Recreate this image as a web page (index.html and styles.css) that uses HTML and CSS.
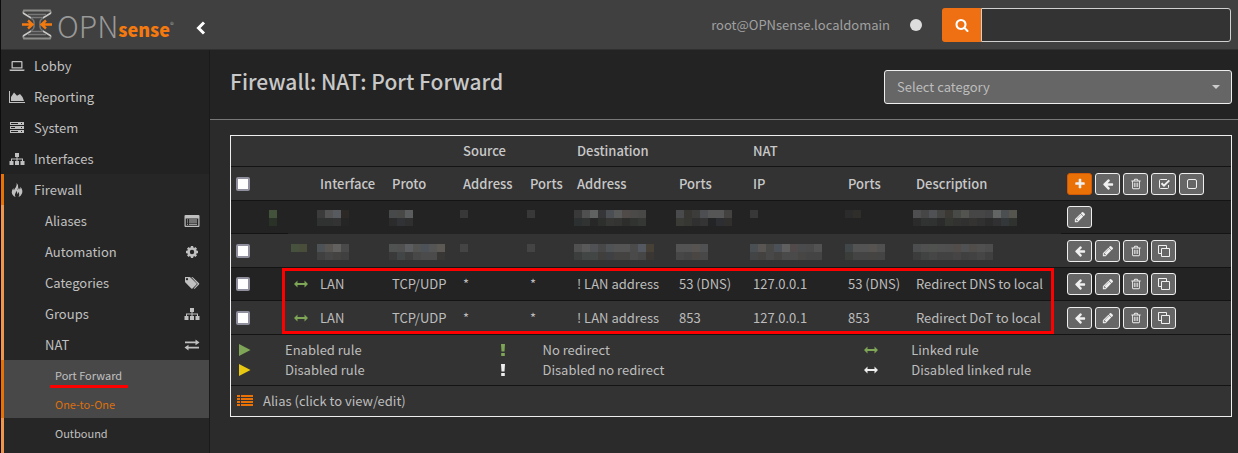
FILE: index.html
```html
<!DOCTYPE html>
<html lang="en">
<head>
<meta charset="utf-8">
<title>Port Forward | NAT | Firewall | OPNsense</title>
<link rel="stylesheet" href="styles.css">
</head>
<body>
<svg class="sprite" aria-hidden="true">
  <symbol id="left" viewBox="0 0 1792 1792"><path d="M1664 896v128q0 53-32.5 90.5t-84.5 37.5h-704l293 294q38 36 38 90t-38 90l-75 76q-37 37-90 37-52 0-91-37l-651-652q-37-37-37-90 0-52 37-91l651-650q38-38 91-38 52 0 90 38l75 74q38 38 38 91t-38 91l-293 293h704q52 0 84.5 37.5t32.5 90.5z"/></symbol>
  <symbol id="trash" viewBox="0 0 1792 1792"><path d="M704 736v576q0 14-9 23t-23 9h-64q-14 0-23-9t-9-23v-576q0-14 9-23t23-9h64q14 0 23 9t9 23zm256 0v576q0 14-9 23t-23 9h-64q-14 0-23-9t-9-23v-576q0-14 9-23t23-9h64q14 0 23 9t9 23zm256 0v576q0 14-9 23t-23 9h-64q-14 0-23-9t-9-23v-576q0-14 9-23t23-9h64q14 0 23 9t9 23zm128 724v-948h-896v948q0 22 7 40.5t14.5 27 10.5 8.5h832q3 0 10.5-8.5t14.5-27 7-40.5zm-672-1076h448l-48-117q-7-9-17-11h-317q-10 2-17 11zm928 32v64q0 14-9 23t-23 9h-96v948q0 83-47 143.5t-113 60.5h-832q-66 0-113-58.5t-47-141.5v-952h-96q-14 0-23-9t-9-23v-64q0-14 9-23t23-9h309l70-167q15-37 54-63t79-26h320q40 0 79 26t54 63l70 167h309q14 0 23 9t9 23z"/></symbol>
  <symbol id="pencil" viewBox="0 0 1792 1792"><path d="M491 1536l91-91-235-235-91 91v107h128v128h107zm523-928q0-22-22-22-10 0-17 7l-542 542q-7 7-7 17 0 22 22 22 10 0 17-7l542-542q7-7 7-17zm-54-192l416 416-832 832h-416v-416zm683 96q0 53-37 90l-166 166-416-416 166-165q36-38 90-38 53 0 91 38l235 234q37 39 37 91z"/></symbol>
  <symbol id="plus" viewBox="0 0 1792 1792"><path d="M1600 736v192q0 40-28 68t-68 28h-416v416q0 40-28 68t-68 28h-192q-40 0-68-28t-28-68v-416h-416q-40 0-68-28t-28-68v-192q0-40 28-68t68-28h416v-416q0-40 28-68t68-28h192q40 0 68 28t28 68v416h416q40 0 68 28t28 68z"/></symbol>
  <symbol id="search" viewBox="0 0 1792 1792"><path d="M1216 832q0-185-131.5-316.5t-316.5-131.5-316.5 131.5-131.5 316.5 131.5 316.5 316.5 131.5 316.5-131.5 131.5-316.5zm512 832q0 52-38 90t-90 38q-54 0-90-38l-343-342q-179 124-399 124-143 0-273.5-55.5t-225-150-150-225-55.5-273.5 55.5-273.5 150-225 225-150 273.5-55.5 273.5 55.5 225 150 150 225 55.5 273.5q0 220-124 399l343 343q37 37 37 90z"/></symbol>
  <symbol id="clone" viewBox="0 0 14 14"><path fill="none" stroke="currentColor" d="M4.500 4.500h8v8h-8zM4 9.500H1.500v-8h8V4"/></symbol>
  <symbol id="square" viewBox="0 0 14 14"><rect x="2.500" y="2.500" width="9" height="9" rx="1.500" fill="none" stroke="currentColor"/></symbol>
  <symbol id="checked" viewBox="0 0 14 14"><path fill="none" stroke="currentColor" d="M11.500 8v2.500q0 1-1 1h-7q-1 0-1-1v-7q0-1 1-1h6.500"/><path fill="none" stroke="currentColor" stroke-width="2" d="M4.500 6.200l2.500 2.500 5.300-5.300"/></symbol>
  <symbol id="both" viewBox="0 0 14 14"><path d="M0 7l3.500-3.500v2.600h7v-2.600L14 7l-3.500 3.500v-2.600h-7v2.600z"/></symbol>
  <symbol id="play" viewBox="0 0 14 14"><path d="M1 1v12l11.500-6z"/></symbol>
  <symbol id="bang" viewBox="0 0 14 14"><path d="M5 1h4l-.5 7.500h-3zM5.200 10h3.600v3H5.200z"/></symbol>
  <symbol id="list" viewBox="0 0 16 14"><path d="M0 1h3v2H0zM4 1h12v2H4zM0 4h3v2H0zM4 4h12v2H4zM0 7h3v2H0zM4 7h12v2H4zM0 10h3v2H0zM4 10h12v2H4z"/></symbol>
  <symbol id="laptop" viewBox="0 0 16 14"><path d="M3.500 2h9q1 0 1 1v6.500h-11V3q0-1 1-1zm.3 1.300v5h8.400v-5zM.5 10.500h15v.8q0 .7-1 .7h-13q-1 0-1-.7z" fill-rule="evenodd"/></symbol>
  <symbol id="area" viewBox="0 0 16 14"><path d="M0 1h1v11h15v1H0zM2 11V7l3-4.500 3 3.200L11 4l2.500 3 1.500 4z"/></symbol>
  <symbol id="server" viewBox="0 0 16 14"><path fill-rule="evenodd" d="M1 1h14v3H1zm1 1v1h7V2zm10 0v1h1V2zM1 5h14v3H1zm1 1v1h4V6zm10 0v1h1V6zM1 9h14v3H1zm1 1v1h7v-1zm10 0v1h1v-1z"/></symbol>
  <symbol id="sitemap" viewBox="0 0 16 14"><path d="M6 1h4v4H8.500v1.500h5.500V9h1.500v4h-4V9H13V7.500H8.500V9H10v4H6V9h1.500V7.500H3V9h1.500v4h-4V9H2V6.500h5.500V5H6z"/></symbol>
  <symbol id="fire" viewBox="0 0 16 16"><path d="M7.500 0q2.400 2 1.800 5.200-.2 1.200-1 2.600 1.400-.4 1.800-2.800 1 1 .8 2.500 1.500-.8 1-3.300 3.300 4 1.800 7.800-1 2.700-4 3.900 1.300-1.500.8-3.400-.3-1.400-1.300-2.100.1 1.800-1 2.500.4-2.300-1.300-4 .2 2-.8 3.200-1.200 1.600.2 3.800Q2.200 14.300 2 10.500 2 7.500 4 5.600q-.3 1.800.6 2.700.6-1.700 1.900-3.200Q8.300 2.800 7.500 0z"/></symbol>
  <symbol id="window" viewBox="0 0 16 14"><path fill-rule="evenodd" d="M1.500 1h13q1 0 1 1v10q0 1-1 1h-13q-1 0-1-1V2q0-1 1-1zm.2 3.500v7.300h12.600V4.500zM3 5.500h1v1H3zM5 5.500h8v1H5zM3 7.600h1v1H3zM5 7.600h8v1H5zM3 9.700h1v1H3zM5 9.700h8v1H5z"/></symbol>
  <symbol id="cog" viewBox="0 0 14 14"><circle cx="7" cy="7" r="3.500" fill="none" stroke="currentColor" stroke-width="2.600"/><path stroke="currentColor" stroke-width="2.400" d="M7 1v2M7 11v2M1 7h2M11 7h2M2.800 2.800l1.300 1.300M9.900 9.900l1.300 1.300M2.800 11.200l1.300-1.300M9.900 4.100l1.300-1.300"/></symbol>
  <symbol id="tags" viewBox="0 0 16 14"><path fill-rule="evenodd" d="M1 1h4.500q.6 0 1 .4l6 5.800q.6.600 0 1.200l-4 4.100q-.6.600-1.200 0L1.400 6.600Q1 6.200 1 5.600zm2 1a1.100 1.100 0 1 0 .01 0zM7.300 1H8q.6 0 1 .4l6 5.800q.6.600 0 1.200l-4 4.100q-.8.700-1.300 0l4-4.500z"/></symbol>
  <symbol id="exchange" viewBox="0 0 16 14"><path d="M1 3.500h10.500v-2L15.500 4.500l-4 2.700V5.300H1zM15 8.700H4.500v-2L.5 9.600l4 2.900v-2H15z"/></symbol>
</svg>

<header class="topbar">
  <a class="brand" href="#" aria-label="OPNsense">
    <svg class="mark" viewBox="0 0 30 31" aria-hidden="true">
      <path fill="none" stroke="#8d8d8b" stroke-width="2" d="M1 4l1-2.500h26L29 4M1 27l1 2.500h26l1-2.500"/>
      <path fill="none" stroke="#c9c9c7" stroke-width="1.500" d="M1 4l9 5.500M1 27l9-5.500M29 4l-9 5.500M29 27l-9-5.500"/>
      <path fill="none" stroke="#777" stroke-width="1.500" d="M9 9q3 2 3 4v5q0 2-3 4M21 9q-3 2-3 4v5q0 2 3 4M6 5.500h18M9 8.500h12M9 22.500h12M6 25.500h18"/>
      <path fill="none" stroke="#f47a10" stroke-width="2.400" d="M0 15.500h10M6 11.500l4.500 4-4.500 4M30 15.500H20M24 11.500l-4.500 4 4.500 4"/>
    </svg>
    <span class="word-a">OPN</span><span class="word-b">sense</span><span class="reg">®</span>
  </a>
  <button class="collapse" type="button" aria-label="Toggle sidebar"><svg viewBox="0 0 10 14" aria-hidden="true"><path fill="none" stroke="#fff" stroke-width="3" d="M8 1.500L2.500 7 8 12.500"/></svg></button>
  <span class="user">root@OPNsense.localdomain</span>
  <span class="status"></span>
  <form class="search">
    <button type="button" aria-label="Search"><svg aria-hidden="true"><use href="#search"/></svg></button>
    <input type="text" aria-label="Search menu">
  </form>
</header>

<div class="layout">
  <nav class="sidebar">
    <a href="#"><svg><use href="#laptop"/></svg>Lobby</a>
    <a href="#"><svg><use href="#area"/></svg>Reporting</a>
    <a href="#"><svg><use href="#server"/></svg>System</a>
    <a href="#"><svg><use href="#sitemap"/></svg>Interfaces</a>
    <div class="open">
      <a class="current" href="#"><svg><use href="#fire"/></svg>Firewall</a>
      <a class="sub" href="#">Aliases<svg><use href="#window"/></svg></a>
      <a class="sub" href="#">Automation<svg class="narrow"><use href="#cog"/></svg></a>
      <a class="sub" href="#">Categories<svg><use href="#tags"/></svg></a>
      <a class="sub" href="#">Groups<svg><use href="#sitemap"/></svg></a>
      <a class="sub" href="#">NAT<svg><use href="#exchange"/></svg></a>
      <a class="leaf lit" href="#"><span class="underlined">Port Forward</span></a>
      <a class="leaf lit hover" href="#">One-to-One</a>
      <a class="leaf" href="#">Outbound</a>
    </div>
  </nav>

  <main>
    <div class="page-head">
      <h1>Firewall: NAT: Port Forward</h1>
      <div class="picker">
        <select aria-label="Category"><option>Select category</option></select>
      </div>
    </div>

    <div class="panel">
      <table>
        <colgroup><col class="c-check"><col class="c-icon"><col class="c-if"><col class="c-proto"><col class="c-src"><col class="c-sport"><col class="c-dst"><col class="c-dport"><col class="c-ip"><col class="c-nport"><col class="c-desc"><col class="c-act"></colgroup>
        <thead>
          <tr class="groups"><th colspan="4"></th><th colspan="2">Source</th><th colspan="2">Destination</th><th colspan="2">NAT</th><th colspan="2"></th></tr>
          <tr class="names">
            <th><input type="checkbox" aria-label="Select all"></th><th></th><th>Interface</th><th>Proto</th><th>Address</th><th>Ports</th><th>Address</th><th>Ports</th><th>IP</th><th>Ports</th><th>Description</th>
            <td><div class="actions"><button class="add" type="button" aria-label="Add"><svg><use href="#plus"/></svg></button><button type="button" aria-label="Move"><svg><use href="#left"/></svg></button><button type="button" aria-label="Delete"><svg><use href="#trash"/></svg></button><button type="button" aria-label="Enable"><svg class="box"><use href="#checked"/></svg></button><button type="button" aria-label="Disable"><svg class="box"><use href="#square"/></svg></button></div></td>
          </tr>
        </thead>
        <tbody>
          <tr class="masked">
            <td class="flag"><span class="mosaic" data-rows="43523a|2a3127"></span></td><td></td>
            <td><span class="mosaic" data-rows="3b3b3b 535353 575b60 2c2826|303232 303232 333333 252525"></span></td>
            <td><span class="mosaic" data-rows="48494b 484846 5a5c5d|2b2b2b 303236 2f2f2f"></span></td>
            <td><span class="mosaic" data-rows="383838|232323"></span></td>
            <td><span class="mosaic" data-rows="383838|232323"></span></td>
            <td><span class="mosaic" data-rows="393939 505050 606261 363638 4b4f53 585a59 504b49 4b4a49 484847|2d3031 313332 272727 2c2f2c 363735 343532 2d2d2b 303330 343733"></span></td>
            <td><span class="mosaic" data-rows="484a4c 373633 3c3c3b 4c4e51 565656 565656 444240|3a3a36 363633 303030 343434 232425 2c2e31 302f2e"></span></td>
            <td><span class="mosaic" data-rows="383838|232323"></span></td>
            <td><span class="mosaic" data-rows="2b2b2b 302e2a|232323 232323"></span></td>
            <td><span class="mosaic" data-rows="4e4e50 464646 505155 444442 3c3834 484a48 535350 464646 464646 434345 636564 4b4f52 55544d|2b2b2b 303332 303131 2b2b2b 343632 323331 303030 343331 303030 2b2b2b 303032 34373a 30322f"></span></td>
            <td><div class="actions"><button type="button" aria-label="Edit"><svg><use href="#pencil"/></svg></button></div></td>
          </tr>
          <tr>
            <td><input type="checkbox" aria-label="Select rule 1"></td>
            <td><span class="mosaic" data-rows="47523e 484e39|333333 333333"></span></td>
            <td><span class="mosaic" data-rows="4d5256 585552 636160 4b4a4a|404040 464646 444342 404040"></span></td>
            <td><span class="mosaic" data-rows="505252 505050 5c5d60 535352 4c5257 555555 5c5853|3a3a3a 434646 3e3e3e 484848 4b4b4b 4b4b4b 393735"></span></td>
            <td><span class="mosaic" data-rows="444444|333333"></span></td>
            <td><span class="mosaic" data-rows="444444|333333"></span></td>
            <td><span class="mosaic" data-rows="505050 595959 505155 484848 505356 545454 545454 4b4b4b 545861 464036|3c3e3d 424645 424645 403f3d 3e4044 444342 444342 4a4a4a 464646 393633"></span></td>
            <td><span class="mosaic" data-rows="535353 535353 575350 505153|474747 444444 4a4644 484848"></span></td>
            <td><span class="mosaic" data-rows="4a4f53 595552 484846 4c5057 5f5f5f 504b4a 4a4b4d 4a4a4a 525252|424446 444240 484848 444342 4a4a4a 4a4a4a 474645 444444 444444"></span></td>
            <td><span class="mosaic" data-rows="414649 535353 535353 575350 505050|3b3d3b 444444 444444 464442 444444"></span></td>
            <td><span class="mosaic" data-rows="4c4d4f 505050 505250 4f504f 504f50 524d4b 505152 504d4b 505050 4d4d4d|3c3c3c 404342 464646 424242 424242 464444 404040 434242 464646 404040"></span></td>
            <td><div class="actions"><button type="button" aria-label="Move"><svg><use href="#left"/></svg></button><button type="button" aria-label="Edit"><svg><use href="#pencil"/></svg></button><button type="button" aria-label="Delete"><svg><use href="#trash"/></svg></button><button type="button" aria-label="Clone"><svg class="box"><use href="#clone"/></svg></button></div></td>
          </tr>
          <tr>
            <td><input type="checkbox" aria-label="Select rule 2"></td><td><svg class="green"><use href="#both"/></svg></td><td>LAN</td><td>TCP/UDP</td><td>*</td><td>*</td><td>! LAN address</td><td>53 (DNS)</td><td>127.0.0.1</td><td>53 (DNS)</td><td>Redirect DNS to local</td>
            <td><div class="actions"><button type="button" aria-label="Move"><svg><use href="#left"/></svg></button><button type="button" aria-label="Edit"><svg><use href="#pencil"/></svg></button><button type="button" aria-label="Delete"><svg><use href="#trash"/></svg></button><button type="button" aria-label="Clone"><svg class="box"><use href="#clone"/></svg></button></div></td>
          </tr>
          <tr>
            <td><input type="checkbox" aria-label="Select rule 3"></td><td><svg class="green"><use href="#both"/></svg></td><td>LAN</td><td>TCP/UDP</td><td>*</td><td>*</td><td>! LAN address</td><td>853</td><td>127.0.0.1</td><td>853</td><td>Redirect DoT to local</td>
            <td><div class="actions"><button type="button" aria-label="Move"><svg><use href="#left"/></svg></button><button type="button" aria-label="Edit"><svg><use href="#pencil"/></svg></button><button type="button" aria-label="Delete"><svg><use href="#trash"/></svg></button><button type="button" aria-label="Clone"><svg class="box"><use href="#clone"/></svg></button></div></td>
          </tr>
        </tbody>
      </table>
      <div class="legend">
        <svg class="green"><use href="#play"/></svg><span>Enabled rule</span><svg class="green"><use href="#bang"/></svg><span>No redirect</span><svg class="green"><use href="#both"/></svg><span>Linked rule</span>
        <svg class="yellow"><use href="#play"/></svg><span>Disabled rule</span><svg class="white"><use href="#bang"/></svg><span>Disabled no redirect</span><svg class="white"><use href="#both"/></svg><span>Disabled linked rule</span>
      </div>
      <div class="alias"><svg><use href="#list"/></svg><span>Alias (click to view/edit)</span></div>
      <div class="highlight"></div>
    </div>
  </main>
</div>
<script src="mosaic.js"></script>
</body>
</html>
```
FILE: styles.css
```css
* { box-sizing: border-box; }
body {
  margin: 0;
  min-height: 100vh;
  display: flex;
  flex-direction: column;
  overflow: hidden;
  background: #2b2b2b;
  border-left: 1px solid #0c0c0c;
  color: #bdbdbd;
  font: 13px/20px "Noto Sans CJK SC", "Noto Sans", sans-serif;
}
a { color: inherit; text-decoration: none; }
svg { width: 14px; height: 14px; flex: none; display: block; fill: currentColor; }
.sprite { position: absolute; width: 0; height: 0; }
button, input, select { font: inherit; color: inherit; }
button { padding: 0; display: flex; align-items: center; justify-content: center; }

.topbar {
  height: 50px;
  display: flex;
  align-items: center;
  padding-right: 7px;
  background: #404040;
  border-bottom: 1px solid #303030;
}
.brand { display: flex; align-items: center; width: 190px; padding-left: 21px; }
.mark { width: 30px; height: 31px; margin-right: 5px; fill: none; }
.word-a { font-size: 30px; font-weight: 300; color: #999; line-height: 32px; }
.word-b { font-size: 18px; font-weight: 900; color: #f47a10; line-height: 20px; padding-top: 8px; }
.reg { font-size: 8px; line-height: 8px; color: #999; }
.collapse { background: none; border: 0; width: 20px; height: 30px; padding-top: 6px; }
.collapse svg { width: 10px; height: 14px; }
.user { margin-left: auto; color: #a0a0a0; }
.status { width: 12px; height: 12px; border-radius: 50%; background: #ddd; margin: 0 20px; }
.search { display: flex; width: 289px; height: 34px; }
.search button { width: 39px; border: 0; border-radius: 3px 0 0 3px; background: #ee7012; color: #fff; }
.search input { flex: 1; min-width: 0; background: #333; border: 1px solid #d0d0d0; border-radius: 0 3px 3px 0; }

.layout { flex: 1; display: flex; }
.sidebar { width: 209px; flex: none; display: flex; flex-direction: column; background: #222; border-right: 1px solid #1a1a1a; }
.sidebar a { display: flex; align-items: center; height: 31px; padding: 0 9px 0 8px; color: #c0c0c0; }
.sidebar svg { width: 16px; height: 14px; margin-right: 9px; }
.open { flex: 1; background: #262626; border-left: 3px solid #f0954e; }
.open a { margin-left: -3px; border-left: 3px solid transparent; padding-left: 41px; justify-content: space-between; }
.open a.current { border-color: #ea7105; padding-left: 5px; justify-content: flex-start; }
.open .sub svg { margin-right: 0; }
.open a.leaf { height: 29px; padding-left: 51px; font-size: 11px; }
.open a.lit { background: #484848; border-color: #ea7105; }
.open a.hover { color: #dc700f; }
.underlined { position: relative; }
.underlined::after { content: ""; position: absolute; left: -5px; right: -6px; bottom: -3px; height: 3px; background: #f00; }

main { flex: 1; min-width: 0; }
.page-head {
  height: 70px;
  display: flex;
  justify-content: space-between;
  padding: 20px 6px 0 20px;
  background: #232323;
  border-bottom: 1px solid #777;
}
h1 { margin: 0; font-size: 21px; line-height: 22px; font-weight: 500; color: #c8c8c8; }
.picker { position: relative; width: 348px; height: 34px; }
.picker select {
  appearance: none;
  width: 100%;
  height: 100%;
  padding: 0 12px;
  background: #666;
  border: 1px solid #eee;
  border-radius: 3px;
}
.picker::after {
  content: "";
  position: absolute;
  right: 12px;
  top: 15px;
  border: 4px solid transparent;
  border-top-color: #ccc;
  border-bottom: 0;
}

.panel { position: relative; margin: 15px 6px 0 20px; border: 1px solid #eee; background: #333; }
table { width: 100%; table-layout: fixed; border-collapse: separate; border-spacing: 0; }
.c-check { width: 5.7%; } .c-icon { width: 2.6%; } .c-if { width: 7.2%; } .c-proto { width: 7.1%; }
.c-src { width: 6.7%; } .c-sport { width: 4.7%; } .c-dst { width: 10.2%; } .c-dport { width: 7.4%; }
.c-ip { width: 9.5%; } .c-nport { width: 6.8%; } .c-desc { width: 15.1%; } .c-act { width: 17%; }
th, td { padding: 0 0 0 6px; text-align: left; white-space: nowrap; border-bottom: 1px solid #141414; }
th:first-child, td:first-child { padding-left: 5px; }
th { font-weight: 500; color: #c8c8c8; }
tr { height: 33px; }
.groups { height: 31px; }
.names, tbody tr:nth-child(even) { height: 34px; }
tbody tr:nth-child(odd) { background: #232323; }
.masked td:not(:first-child):not(:last-child) { border-color: #232323; }
.mosaic { display: inline-grid; grid-auto-rows: 8px; vertical-align: middle; margin-left: -3px; }
.flag .mosaic { margin-left: 33px; }
input[type="checkbox"] {
  appearance: none;
  display: block;
  width: 14px;
  height: 14px;
  margin: 0;
  background: #fff;
  border: 2px solid #8f8f9d;
  border-radius: 2px;
}
.actions { display: flex; gap: 3px; }
.actions button { width: 25px; height: 22px; background: #666; border: 1px solid #eee; border-radius: 3px; color: #f0f0f0; }
.actions svg { width: 12px; height: 12px; }
.actions .box { width: 14px; height: 14px; }
.actions .add { background: #ea7105; border-color: #d05a08; }
.green { color: #7fa557; }
.yellow { color: #e8c810; }
.white { color: #eee; }

.legend {
  display: grid;
  grid-template-columns: 47px 21.2% 47px 32.4% 47px 1fr;
  align-items: center;
  padding: 5px 0 5px 7px;
  border-bottom: 1px solid #141414;
}
.alias { display: flex; align-items: center; gap: 10px; height: 30px; padding-left: 6px; }
.alias svg { width: 16px; color: #ea7105; }
.highlight {
  position: absolute;
  top: 132px;
  left: 5.1%;
  right: 17.7%;
  height: 66px;
  border: 3px solid #f00;
  pointer-events: none;
}
```
FILE: mosaic.js
```js
// Each masked value is a grid of 8px tiles; rows are separated by "|".
document.querySelectorAll(".mosaic").forEach(function (el) {
  var rows = el.dataset.rows.split("|").map(function (r) { return r.split(" "); });
  el.style.gridTemplateColumns = "repeat(" + rows[0].length + ", 8px)";
  rows.flat().forEach(function (color) {
    var tile = document.createElement("span");
    tile.style.background = "#" + color;
    el.appendChild(tile);
  });
});
```
